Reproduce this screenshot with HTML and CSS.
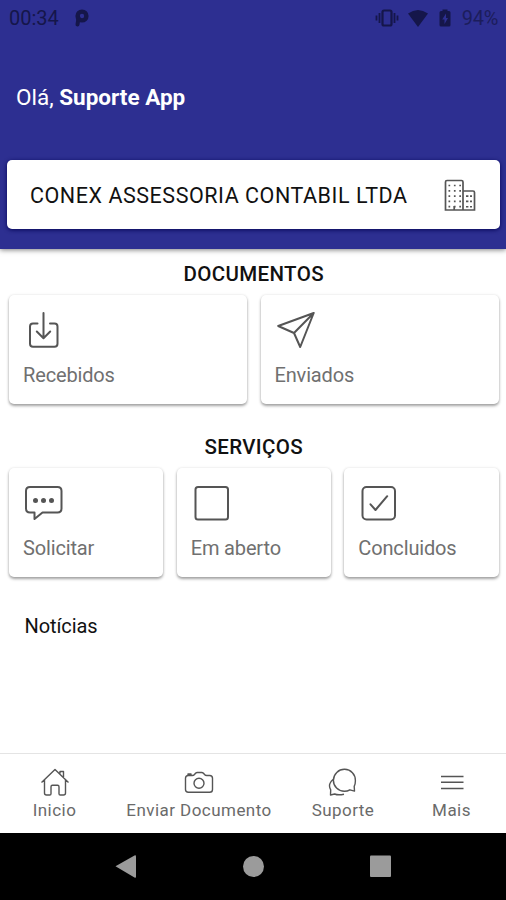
FILE: index.html
```
<!DOCTYPE html>
<html lang="pt-BR">
<head>
  <meta charset="UTF-8" />
  <title>Início</title>
  <link rel="stylesheet" href="styles.css">
</head>
<body>
  <header class="header">
    <div class="status">
      <span class="clock">00:34</span>
      <svg class="parking" width="16" height="18" viewBox="0 0 16 18"><path d="M3.500 15.500L4.500 9" stroke="currentColor" stroke-width="4" stroke-linecap="round"/><circle cx="8" cy="7" r="4.400" fill="none" stroke="currentColor" stroke-width="4.400"/></svg>
      <svg class="vibrate" width="24" height="18" viewBox="0 0 24 18" fill="none" stroke="currentColor"><rect x="7.5" y="1.5" width="9" height="15" rx="1.5" stroke-width="2.2"/><path d="M4.5 4v10M1.5 6.5v5M19.5 4v10M22.5 6.5v5" stroke-width="1.8"/></svg>
      <svg class="wifi" width="20" height="17" viewBox="0 0 20 17"><path d="M0 3.5Q10-3.5 20 3.5L10 17z" fill="currentColor"/></svg>
      <svg class="battery" width="12" height="18" viewBox="0 0 12 18"><path fill="currentColor" fill-rule="evenodd" d="M3.5 2V.5h5V2H10q1.5 0 1.5 1.5v12.5q0 1.5-1.5 1.5H2q-1.5 0-1.5-1.5V3.5Q.5 2 2 2zM7 4.5L3.2 10.500h2.3V15l3.500-6H7z"/></svg>
      <span class="percent">94%</span>
    </div>
    <p class="hello">Olá, <b>Suporte App</b></p>
    <div class="company">
      <span>CONEX ASSESSORIA CONTABIL LTDA</span>
      <svg width="32" height="34" viewBox="0 0 32 34" fill="none" stroke="#555"><path d="M1.5 32V4q0-1.500 1.500-1.500h14.500q1.500 0 1.500 1.500v28zM19 13h10q1.500 0 1.500 1.500V32H19M10.200 32v-4" stroke-width="1.700"/><path d="M4.500 7.500h13M4.500 12.800h13M4.500 18.100h13M4.500 23.400h13M4.500 28.700h13" stroke-width="1.700" stroke-dasharray="1.700 3.700"/><path d="M22 18.100h6M22 23.400h6M22 28.700h6" stroke-width="1.600" stroke-dasharray="2.400 1.600"/></svg>
    </div>
  </header>

  <main class="content">
    <h2>DOCUMENTOS</h2>
    <div class="cards">
      <div class="card">
        <svg class="icon" viewBox="0 0 40 40"><path d="M14.500 12.500H10q-3 0-3 3v17.200q0 3 3 3h21.500q3 0 3-3V15.500q0-3-3-3H27M20.500 2v25M13.800 20.500l6.700 6.700 6.700-6.700"/></svg>
        <span>Recebidos</span>
      </div>
      <div class="card">
        <svg class="icon" viewBox="0 0 40 40"><path d="M38.700 2L3.200 15l15.800 7 6.200 14zM38.700 2L19 22"/></svg>
        <span>Enviados</span>
      </div>
    </div>

    <h2 class="services-title">SERVIÇOS</h2>
    <div class="cards">
      <div class="card">
        <svg class="icon" viewBox="0 0 40 40"><path d="M7 3h27.500q4 0 4 4v17.400q0 4-4 4H19.500L11.500 35v-6.600H7q-4 0-4-4V7q0-4 4-4z"/><g class="dots"><circle cx="12.500" cy="16.500" r="2.500"/><circle cx="20.500" cy="16.500" r="2.500"/><circle cx="28.500" cy="16.500" r="2.500"/></g></svg>
        <span>Solicitar</span>
      </div>
      <div class="card">
        <svg class="icon" viewBox="0 0 40 40"><rect x="4.500" y="3" width="32.500" height="32.500" rx="2.500"/></svg>
        <span>Em aberto</span>
      </div>
      <div class="card">
        <svg class="icon" viewBox="0 0 40 40"><rect x="4.500" y="3" width="32.500" height="32.500" rx="4"/><path d="M12.500 20.300l5 5.700L29.200 12.200"/></svg>
        <span>Concluidos</span>
      </div>
    </div>

    <p class="news">Notícias</p>
  </main>

  <nav class="tabs">
    <div class="tab">
      <svg width="30" height="30" viewBox="0 0 30 30"><path d="M1.500 15.500L15 2.500l13.500 13M20 6.500V4.500h3.500V11M4.500 13v13q0 2 2 2h3.200q1.300 0 1.300-1.300v-7q0-1.400 1.400-1.400h5.200q1.400 0 1.400 1.400v7q0 1.300 1.300 1.300h3.200q2 0 2-2V13"/></svg>
      <span>Inicio</span>
    </div>
    <div class="tab">
      <svg width="30" height="30" viewBox="0 0 30 30"><path d="M10.500 7.500l1-1.200q.8-.8 1.800-.8h4.400q1 0 1.800.8l1 1.200q.9 1 2.200 1h3q2.800 0 2.800 2.800v11.200q0 2.800-2.800 2.800H4.300q-2.800 0-2.800-2.800V11.300q0-2.800 2.800-2.800h4q1.300 0 2.200-1zM4 8.300V7h3v1.300"/><circle cx="15" cy="16.200" r="5"/></svg>
      <span>Enviar Documento</span>
    </div>
    <div class="tab">
      <svg width="30" height="30" viewBox="0 0 30 30"><path d="M26.200 19.300q1.200-2.200 1.200-5.600A11 11 0 1 0 16.400 24.300q3 0 5.500-1.500l4.600 1.300zM5 12.500Q1.300 16 1.500 19q.1 2 1.200 3.800L2.500 28l4.200-1q3.300 1.500 9.300.2"/></svg>
      <span>Suporte</span>
    </div>
    <div class="tab">
      <svg width="30" height="30" viewBox="0 0 30 30"><path d="M4 9.500h22.500M4 15.200h22.500M4 21.500h22.500"/></svg>
      <span>Mais</span>
    </div>
  </nav>

  <footer class="system">
    <svg viewBox="0 0 127 66"><path d="M52.500 33.200L71.500 22.500q1.500-.8 1.500 1v20q0 1.800-1.500 1z"/></svg>
    <svg viewBox="0 0 127 66"><circle cx="63.500" cy="33.500" r="10.500"/></svg>
    <svg viewBox="0 0 127 66"><rect x="53" y="22.500" width="21" height="21.500" rx="1"/></svg>
  </footer>
</body>
</html>
```

FILE: styles.css
```
* { box-sizing: border-box; }
body { margin: 0; height: 900px; display: flex; flex-direction: column; background: #fff; color: #111; font-family: Roboto, sans-serif; font-size: 20px; overflow: hidden; }
svg { display: block; flex: none; }
p, h2 { margin: 0; }

.header { height: 249px; background: #2d2f91; padding: 0 6px 0 7px; box-shadow: 0 1px 5px rgba(0, 0, 0, 0.5); }
.status { display: flex; align-items: center; height: 36px; padding: 0 2px; color: #15164a; }
.clock { letter-spacing: 0; }
.parking { margin-left: 15px; }
.vibrate { margin-left: auto; }
.wifi { margin-left: 9px; }
.battery { margin-left: 11px; }
.percent { margin-left: 11px; letter-spacing: -0.3px; color: #1c1d5c; }
.hello { height: 124px; padding: 0 9px; line-height: 123px; font-size: 22.5px; color: #fff; }
.company { display: flex; align-items: center; justify-content: space-between; height: 69px; padding: 0 24px 0 23px; border-radius: 5px; background: #fff; font-size: 21.5px; letter-spacing: 0.54px; line-height: 26px; box-shadow: 0 1px 4px rgba(0, 0, 80, 0.9); }
.company span { padding-top: 2px; }

.content { flex: 1; padding: 0 7.5px 0 9px; }
h2 { height: 46px; line-height: 51px; font-size: 20.5px; font-weight: 500; letter-spacing: 0.35px; text-align: center; }
.services-title { margin-top: 18px; }
.cards { display: flex; gap: 13.5px; height: 109px; }
.card { flex: 1; padding: 16px 14px; border-radius: 5px; background: #fff; box-shadow: 0 2px 3px rgba(0, 0, 0, 0.35), 0 0 3px rgba(0, 0, 0, 0.1); color: #707070; letter-spacing: -0.15px; }
.card span { display: block; margin-top: 12px; line-height: 24px; }
.icon { width: 40px; height: 40px; fill: none; stroke: #555; stroke-width: 2; stroke-linecap: round; stroke-linejoin: round; }
.dots { fill: #555; stroke: none; }
.news { margin: 37px 0 0 15.5px; line-height: 25px; letter-spacing: -0.1px; }

.tabs { display: grid; grid-template-columns: 109px 180px 108px 1fr; height: 80px; border-top: 1px solid #e4e4e4; }
.tab { display: flex; flex-direction: column; align-items: center; padding-top: 13px; font-size: 17px; line-height: 26px; letter-spacing: 0.45px; color: #6a6a6a; }
.tab svg { fill: none; stroke: #555; stroke-width: 1.4; stroke-linejoin: round; }
.system { display: flex; justify-content: center; height: 67px; background: #000; }
.system svg { width: 127px; height: 66px; fill: #9b9b9b; }
```
